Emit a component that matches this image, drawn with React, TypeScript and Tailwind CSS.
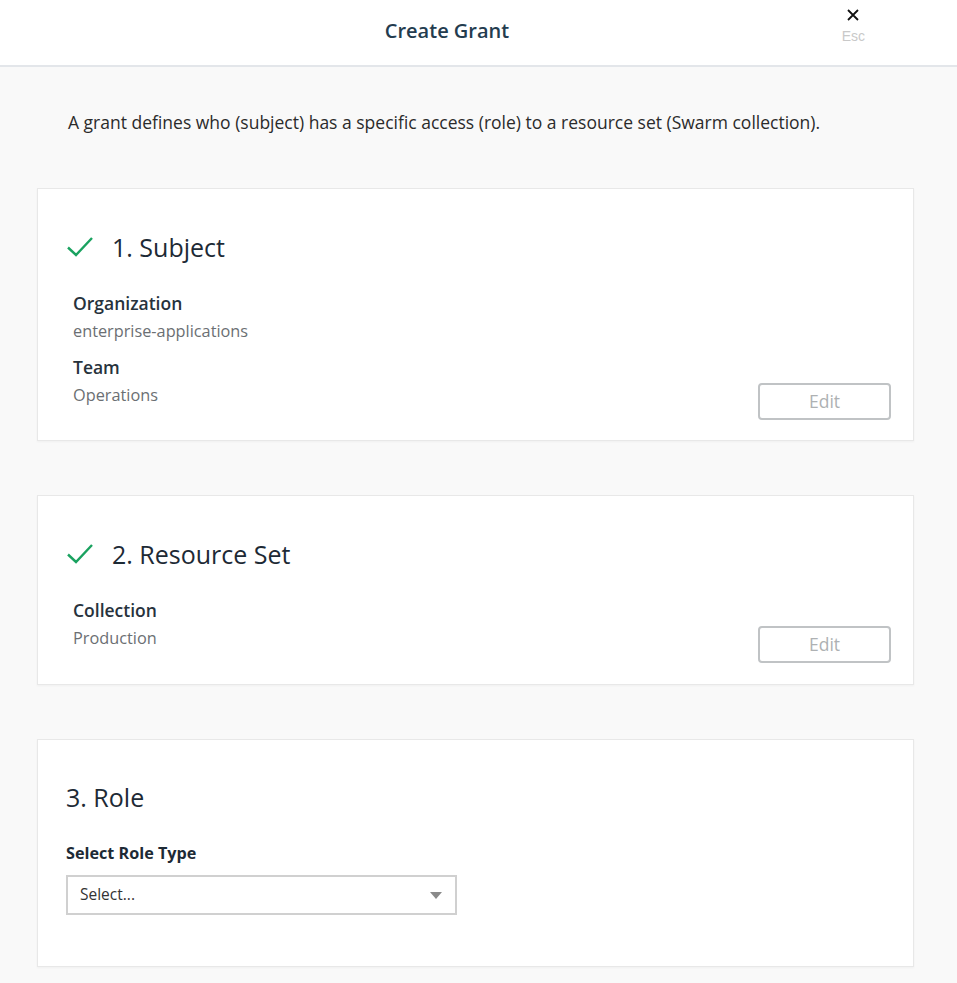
import React from 'react';

function Check() {
  return (
    <svg width="28" height="22" viewBox="0 0 28 22" fill="none" className="shrink-0">
      <path d="M2 11.5L10 19L26 2" stroke="#1aa260" strokeWidth="2.4" />
    </svg>
  );
}

function Field({ label, value, last }: { label: string; value: string; last?: boolean }) {
  return (
    <div className={last ? '' : 'mb-[8px]'}>
      <div className="text-[17.5px] leading-[28px] font-semibold text-[#27323c]">{label}</div>
      <div className="text-[16.3px] leading-[28px] text-[#6b6f73]">{value}</div>
    </div>
  );
}

function EditButton() {
  return (
    <button className="w-[133px] h-[37px] rounded-[4px] border-2 border-[#c0c3c5] bg-white text-[17.5px] text-[#aeb1b3]">
      Edit
    </button>
  );
}

export default function App() {
  return (
    <div className="min-h-[983px] bg-[#f9f9f9] font-['Open_Sans',sans-serif]">
      <header className="relative h-[67px] bg-white border-b-2 border-[#e3e6ea] flex items-center justify-center pr-[63px]">
        <h1 className="text-[20px] font-semibold text-[#243c4f] -mt-[4px]">Create Grant</h1>
        <div className="absolute right-[92px] top-[4px] flex flex-col items-center">
          <svg width="14" height="14" viewBox="0 0 14 14" className="mt-[4px]">
            <path d="M2 2L12 12M12 2L2 12" stroke="#111" strokeWidth="1.8" />
          </svg>
          <span className="font-['Liberation_Sans',sans-serif] text-[14px] leading-[18px] text-[#c9c9c9] mt-[5px]">Esc</span>
        </div>
      </header>

      <p className="pl-[68px] pt-[41px] text-[17.5px] leading-[28px] text-[#2b2b2b]">
        A grant defines who (subject) has a specific access (role) to a resource set (Swarm collection).
      </p>

      <div className="ml-[37px] w-[877px] mt-[52px] flex flex-col gap-[54px]">
        <section className="bg-white border border-[#e8e8e8] shadow-[0_1px_2px_rgba(0,0,0,0.04)] h-[253px] pl-[28px] pr-[22px] pt-[42px]">
          <div className="flex items-center gap-[18px]">
            <Check />
            <h2 className="text-[25px] leading-[32px] text-[#1d2a35]">1. Subject</h2>
          </div>
          <div className="flex items-end justify-between pl-[7px] mt-[26px]">
            <div>
              <Field label="Organization" value="enterprise-applications" />
              <Field label="Team" value="Operations" last />
            </div>
            <div className="-mb-[11px]">
              <EditButton />
            </div>
          </div>
        </section>

        <section className="bg-white border border-[#e8e8e8] shadow-[0_1px_2px_rgba(0,0,0,0.04)] h-[190px] pl-[28px] pr-[22px] pt-[42px]">
          <div className="flex items-center gap-[18px]">
            <Check />
            <h2 className="text-[25px] leading-[32px] text-[#1d2a35]">2. Resource Set</h2>
          </div>
          <div className="flex items-end justify-between pl-[7px] mt-[26px]">
            <Field label="Collection" value="Production" last />
            <div className="-mb-[11px]">
              <EditButton />
            </div>
          </div>
        </section>

        <section className="bg-white border border-[#e8e8e8] shadow-[0_1px_2px_rgba(0,0,0,0.04)] h-[228px] pl-[28px] pt-[41px]">
          <h2 className="text-[25px] leading-[32px] text-[#1d2a35]">3. Role</h2>
          <div className="mt-[27px] text-[16.2px] leading-[26px] font-bold text-[#1d2a35]">Select Role Type</div>
          <div className="mt-[9px] w-[391px] h-[40px] border-2 border-[#d0d0d0] flex items-center justify-between pl-[12px] pr-[13px]">
            <span className="text-[15.5px] text-[#333]">Select...</span>
            <svg width="12" height="7" viewBox="0 0 12 7">
              <path d="M0 0H12L6 7Z" fill="#8a8a8a" />
            </svg>
          </div>
        </section>
      </div>
    </div>
  );
}
